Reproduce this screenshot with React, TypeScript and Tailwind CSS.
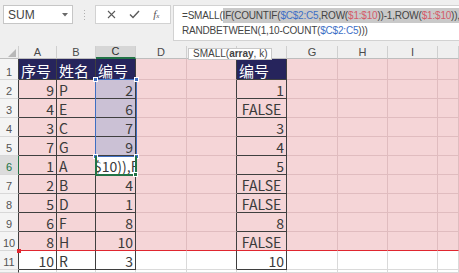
import React from "react";

const COLS = [
  { key: "rh", w: "w-[19px]" },
  { key: "A", w: "w-[38px]" },
  { key: "B", w: "w-[39px]" },
  { key: "C", w: "w-[40px]" },
  { key: "D", w: "w-[51px]" },
  { key: "E", w: "w-[50px]" },
  { key: "F", w: "w-[50px]" },
  { key: "G", w: "w-[51px]" },
  { key: "H", w: "w-[50px]" },
  { key: "I", w: "w-[50px]" },
  { key: "J", w: "flex-1" },
];

const A = ["序号", "9", "4", "3", "7", "1", "2", "5", "6", "8", "10"];
const B = ["姓名", "P", "E", "C", "G", "A", "B", "D", "F", "H", "R"];
const C = ["编号", "2", "6", "7", "9", "", "4", "1", "8", "10", "3"];
const F = ["编号", "1", "FALSE", "3", "4", "5", "FALSE", "FALSE", "8", "FALSE", "10"];

const CELL_FONT = { fontFamily: '"Noto Sans CJK SC", "Noto Sans", sans-serif' };

function cellClass(r: number, c: string) {
  const table = ["A", "B", "C", "F"].includes(c) && r <= 11;
  let bg = r <= 10 ? "bg-[#f5d5d7]" : "bg-white";
  if (table && r === 1) bg = "bg-[#26245c]";
  if (c === "C" && r >= 2 && r <= 5) bg = "bg-[#cbc1d5]";
  if (c === "C" && r === 6) bg = "bg-white";
  const right =
    table || (c === "E" && r <= 11)
      ? "border-r-[#3f3f3f]"
      : r <= 10
        ? "border-r-[#e0bcbf]"
        : "border-r-[#dadada]";
  const bottom =
    r === 10
      ? "border-b-[#e0262f]"
      : table
        ? "border-b-[#3f3f3f]"
        : r <= 10
          ? "border-b-[#e0bcbf]"
          : "border-b-[#dadada]";
  return `${bg} ${right} ${bottom}`;
}

function cellText(r: number, c: string) {
  const i = r - 1;
  if (r > 11) return null;
  if (c === "A") return A[i];
  if (c === "B") return B[i];
  if (c === "C") return C[i];
  if (c === "F") return F[i];
  return null;
}

function Row({ r }: { r: number }) {
  const h = r === 1 ? "h-[21px]" : r === 12 ? "flex-1" : "h-[19px]";
  return (
    <div className={`flex ${h} shrink-0`}>
      {COLS.map((col) => {
        if (col.key === "rh") {
          const active = r === 6;
          return (
            <div
              key={col.key}
              className={`${col.w} shrink-0 flex items-end justify-center pb-[1px] border-b border-r text-[11px] leading-none border-b-[#d8d8d8] ${
                active
                  ? "bg-[#dcdcdc] text-[#217346] border-r-[#217346]"
                  : "bg-[#f4f4f4] text-[#555] border-r-[#3f3f3f]"
              }`}
              style={{ fontFamily: '"Liberation Sans", Arial, sans-serif' }}
            >
              {r <= 11 ? r : ""}
            </div>
          );
        }
        const t = cellText(r, col.key);
        const header = r === 1;
        const editing = col.key === "C" && r === 6;
        const isBool = t === "FALSE";
        const align =
          header || col.key === "B" || editing
            ? "justify-start pl-[2px]"
            : isBool
              ? "justify-center"
              : "justify-end pr-[2px]";
        return (
          <div
            key={col.key}
            className={`${col.w} shrink-0 flex items-end ${align} overflow-hidden whitespace-nowrap border-b border-r leading-none pb-[1px] ${
              header ? "text-white text-[15px]" : "text-[#3a3a3a] text-[14px]"
            } ${cellClass(r, col.key)}`}
            style={CELL_FONT}
          >
            {editing ? <span className="-ml-[4px] shrink-0">$10)),R</span> : t}
          </div>
        );
      })}
    </div>
  );
}

function ColumnHeader() {
  const letters = ["", "A", "B", "C", "D", "E", "F", "G", "H", "I", ""];
  return (
    <div className="flex h-[13px] shrink-0 bg-[#efefef]">
      {COLS.map((col, i) => (
        <div
          key={col.key}
          className={`${col.w} shrink-0 relative flex items-center justify-center border-r border-b text-[11px] leading-none border-r-[#cfcfcf] ${
            col.key === "C"
              ? "bg-[#d6d6d6] text-[#2f2f2f] border-b-2 border-b-[#217346]"
              : "text-[#4a4a4a] border-b-[#bdbdbd]"
          }`}
          style={{ fontFamily: '"Liberation Sans", Arial, sans-serif' }}
        >
          {i === 0 ? (
            <svg width="8" height="8" viewBox="0 0 8 8" className="absolute right-[2px] bottom-[1px]">
              <polygon points="8,0 8,8 0,8" fill="#b8b8b8" />
            </svg>
          ) : (
            letters[i]
          )}
        </div>
      ))}
    </div>
  );
}

function TopBar() {
  const blue = "text-[#3d6fc6]";
  const red = "text-[#d45a6a]";
  return (
    <div
      className="flex h-[46px] shrink-0 bg-[#efefef] pt-[5px]"
      style={{ fontFamily: '"Liberation Sans", Arial, sans-serif' }}
    >
      <div className="ml-[3px] w-[70px] h-[19px] bg-white border border-[#c6c6c6] flex items-center justify-between pl-[4px] pr-[4px] text-[12px] text-[#444]">
        <span>SUM</span>
        <svg width="6" height="4" viewBox="0 0 6 4">
          <polygon points="0,0 6,0 3,3.5" fill="#6a6a6a" />
        </svg>
      </div>
      <div className="w-[22px] h-[19px] flex flex-col items-center justify-center gap-[2px]">
        <span className="w-[1px] h-[1px] bg-[#b0b0b0]" />
        <span className="w-[1px] h-[1px] bg-[#b0b0b0]" />
        <span className="w-[1px] h-[1px] bg-[#b0b0b0]" />
        <span className="w-[1px] h-[1px] bg-[#b0b0b0]" />
      </div>
      <div className="w-[76px] h-[19px] bg-white border border-[#d2d2d2] flex items-center justify-around px-[4px] text-[#555]">
        <svg width="9" height="9" viewBox="0 0 9 9">
          <path d="M1 1 L8 8 M8 1 L1 8" stroke="#5a5a5a" strokeWidth="1.1" />
        </svg>
        <svg width="11" height="9" viewBox="0 0 11 9">
          <path d="M1 4.5 L4 7.5 L10 1" stroke="#5a5a5a" strokeWidth="1.4" fill="none" />
        </svg>
        <span className="text-[11px] italic leading-none text-[#555]" style={{ fontFamily: '"Liberation Serif", serif' }}>
          f<span className="text-[7px]">x</span>
        </span>
      </div>
      <div className="ml-[2px] flex-1 h-[36px] bg-white border border-r-0 border-[#d2d2d2] pl-[8px] pt-[2px] text-[10px] tracking-[-0.2px] text-[#444] leading-[15px] whitespace-nowrap overflow-hidden">
        <div>
          =SMALL(
          <span className="bg-[#c9c9c9] py-[2px]">
            IF(COUNTIF(<span className={blue}>$C$2:C5</span>,ROW(<span className={red}>$1:$10</span>))-1,ROW(
            <span className={red}>$1:$10</span>)),
          </span>
        </div>
        <div>
          RANDBETWEEN(1,10-COUNT(<span className={blue}>$C$2:C5</span>)))
        </div>
      </div>
    </div>
  );
}

export default function App() {
  return (
    <div className="w-[459px] h-[273px] overflow-hidden flex flex-col bg-white">
      <TopBar />
      <div className="relative flex-1 flex flex-col">
        <ColumnHeader />
        {[1, 2, 3, 4, 5, 6, 7, 8, 9, 10, 11, 12].map((r) => (
          <Row key={r} r={r} />
        ))}

        {/* C2:C5 reference highlight */}
        <div className="absolute left-[95px] top-[33px] w-[42px] h-[78px] border-[1.5px] border-[#3f6fc2] pointer-events-none">
          <span className="absolute -left-[3px] -top-[3px] w-[5px] h-[5px] bg-[#3f6fc2] border border-white" />
          <span className="absolute -right-[3px] -top-[3px] w-[5px] h-[5px] bg-[#3f6fc2] border border-white" />
          <span className="absolute -left-[3px] -bottom-[3px] w-[5px] h-[5px] bg-[#3f6fc2] border border-white" />
          <span className="absolute -right-[3px] -bottom-[3px] w-[5px] h-[5px] bg-[#3f6fc2] border border-white" />
        </div>

        {/* active cell C6 */}
        <div className="absolute left-[95px] top-[110px] w-[42px] h-[20px] border-l-2 border-b-2 border-r-2 border-[#217346] pointer-events-none">
          <span className="absolute -right-[3px] -bottom-[3px] w-[5px] h-[5px] bg-[#217346] border border-white" />
        </div>

        {/* $1:$10 handle */}
        <span className="absolute left-[17px] top-[203px] w-[4px] h-[4px] bg-[#e0262f]" />

        {/* function tooltip */}
        <div
          className="absolute left-[188px] top-[2px] h-[12px] px-[4px] bg-white border border-[#c9c9c9] text-[10px] leading-[10px] text-[#444] flex items-center whitespace-nowrap"
          style={{ fontFamily: '"Liberation Sans", Arial, sans-serif' }}
        >
          SMALL(<b className="font-bold">array</b>, k)
        </div>
      </div>
    </div>
  );
}
